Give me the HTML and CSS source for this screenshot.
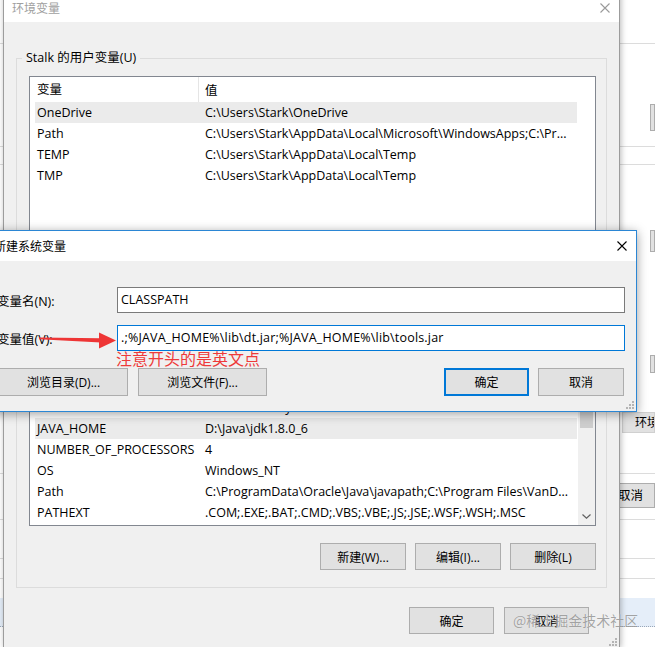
FILE: index.html
```html
<!DOCTYPE html>
<html lang="zh-CN">
<head>
<meta charset="utf-8">
<title>环境变量</title>
<link rel="stylesheet" href="styles.css">
</head>
<body>
<div class="desk">
  <div class="bg">
    <div class="sp h43"></div>
    <div class="ln"></div>
    <div class="sp h60"></div>
    <div class="bgrow h27"><span class="pbtn at650"></span></div>
    <div class="sp h15"></div>
    <div class="ln"></div>
    <div class="sp h17"></div>
    <div class="ln"></div>
    <div class="sp h65"></div>
    <div class="bgrow h22"><span class="pbtn at650"></span></div>
    <div class="sp h103"></div>
    <div class="bgrow h18"><span class="pbtn at650"></span></div>
    <div class="sp h39"></div>
    <div class="bgrow h21"><span class="pbtn envbtn">环境变量(N)...</span></div>
    <div class="sp h40"></div>
    <div class="ln"></div>
    <div class="sp h9"></div>
    <div class="bgrow h25"><span class="pbtn cancelbtn">取消</span></div>
    <div class="sp h11"></div>
    <div class="ln"></div>
    <div class="sp h38"></div>
    <div class="ln"></div>
    <div class="sp h19"></div>
    <div class="ln"></div>
    <div class="sp h19"></div>
    <div class="band"></div>
  </div>

  <section class="win main">
    <header class="titlebar inactive">
      <span class="title">环境变量</span>
      <span class="close"><svg viewBox="0 0 10 10" width="10" height="10"><path d="M0.5 0.5 L9.5 9.5 M9.5 0.5 L0.5 9.5" /></svg></span>
    </header>
    <div class="body">
      <div class="group g1">
        <span class="legend">Stalk 的用户变量(U)</span>
        <div class="list l1">
          <div class="lmain">
            <div class="lhead"><span class="h1">变量</span><span class="h2">值</span></div>
            <div class="row sel"><span class="c1">OneDrive</span><span class="c2">C:\Users\Stark\OneDrive</span></div>
            <div class="row"><span class="c1">Path</span><span class="c2">C:\Users\Stark\AppData\Local\Microsoft\WindowsApps;C:\Pr...</span></div>
            <div class="row"><span class="c1">TEMP</span><span class="c2">C:\Users\Stark\AppData\Local\Temp</span></div>
            <div class="row"><span class="c1">TMP</span><span class="c2">C:\Users\Stark\AppData\Local\Temp</span></div>
          </div>
        </div>
        <div class="btnrow">
          <button class="btn w86">新建(N)...</button>
          <button class="btn w86">编辑(E)...</button>
          <button class="btn w86">删除(D)</button>
        </div>
      </div>

      <div class="group g2">
        <span class="legend">系统变量(S)</span>
        <div class="list l2">
          <div class="lmain">
            <div class="lhead"><span class="h1">变量</span><span class="h2">值</span></div>
            <div class="rows">
              <div class="row"><span class="c1">ComSpec</span><span class="c2">C:\Windows\system32\cmd.exe</span></div>
              <div class="row"><span class="c1">DriverData</span><span class="c2">C:\Windows\System32\Drivers\DriverData</span></div>
              <div class="row sel"><span class="c1">JAVA_HOME</span><span class="c2">D:\Java\jdk1.8.0_6</span></div>
              <div class="row"><span class="c1">NUMBER_OF_PROCESSORS</span><span class="c2">4</span></div>
              <div class="row"><span class="c1">OS</span><span class="c2">Windows_NT</span></div>
              <div class="row"><span class="c1">Path</span><span class="c2">C:\ProgramData\Oracle\Java\javapath;C:\Program Files\VanD...</span></div>
              <div class="row"><span class="c1">PATHEXT</span><span class="c2">.COM;.EXE;.BAT;.CMD;.VBS;.VBE;.JS;.JSE;.WSF;.WSH;.MSC</span></div>
            </div>
          </div>
          <div class="vscroll">
            <div class="sarrow"><svg viewBox="0 0 9 5" width="9" height="5"><path d="M0.5 4.5 L4.5 0.8 L8.5 4.5"/></svg></div>
            <div class="track"><div class="thumb"></div></div>
            <div class="sarrow"><svg viewBox="0 0 9 5" width="9" height="5"><path d="M0.5 0.5 L4.5 4.2 L8.5 0.5"/></svg></div>
          </div>
        </div>
        <div class="btnrow">
          <button class="btn w86">新建(W)...</button>
          <button class="btn w86">编辑(I)...</button>
          <button class="btn w86">删除(L)</button>
        </div>
      </div>

      <div class="dlgbtns">
        <button class="btn w85">确定</button>
        <button class="btn w85">取消</button>
      </div>
    </div>
    <span class="grip"><svg viewBox="0 0 8 8" width="8" height="8"><rect x="6" y="0" width="2" height="2"/><rect x="3" y="3" width="2" height="2"/><rect x="6" y="3" width="2" height="2"/><rect x="0" y="6" width="2" height="2"/><rect x="3" y="6" width="2" height="2"/><rect x="6" y="6" width="2" height="2"/></svg></span>
  </section>

  <section class="win newvar">
    <header class="titlebar">
      <span class="title">新建系统变量</span>
      <span class="close"><svg viewBox="0 0 10 10" width="10" height="10"><path d="M0.5 0.5 L9.5 9.5 M9.5 0.5 L0.5 9.5" /></svg></span>
    </header>
    <div class="body">
      <div class="form">
        <label class="flabel">变量名(N):</label>
        <div class="input">CLASSPATH</div>
        <label class="flabel">变量值(V):</label>
        <div class="input focus">.;%JAVA_HOME%\lib\dt.jar;%JAVA_HOME%\lib\tools.jar</div>
      </div>
      <div class="nbtns">
        <div class="bgroup left">
          <button class="btn w129">浏览目录(D)...</button>
          <button class="btn w129">浏览文件(F)...</button>
        </div>
        <div class="bgroup right">
          <button class="btn w85 default">确定</button>
          <button class="btn w86">取消</button>
        </div>
      </div>
    </div>
    <span class="grip"><svg viewBox="0 0 8 8" width="8" height="8"><rect x="6" y="0" width="2" height="2"/><rect x="3" y="3" width="2" height="2"/><rect x="6" y="3" width="2" height="2"/><rect x="0" y="6" width="2" height="2"/><rect x="3" y="6" width="2" height="2"/><rect x="6" y="6" width="2" height="2"/></svg></span>
  </section>

  <svg class="arrow" viewBox="0 0 655 647" width="655" height="647">
    <polygon points="39,337.6 101,338.3 101,342.6 39,339.2" />
    <polygon points="99,332.5 116,340.4 99,348.5" />
  </svg>
  <div class="note">注意开头的是英文点</div>
  <div class="watermark">@稀土掘金技术社区</div>
</div>
</body>
</html>
```

FILE: styles.css
```css
* { box-sizing: border-box; }
html, body { margin: 0; padding: 0; }
body {
  width: 655px;
  height: 647px;
  overflow: hidden;
  background: #ffffff;
  font-family: "Open Sans", "Noto Sans CJK SC", sans-serif;
  font-size: 12.5px;
  color: #000;
}
.desk { position: relative; width: 655px; height: 647px; overflow: hidden; }

/* background window */
.bg { position: absolute; inset: 0; display: flex; flex-direction: column; background: #fff; }
.sp { flex: none; }
.h9 { height: 9px; } .h11 { height: 11px; } .h15 { height: 15px; } .h17 { height: 17px; }
.h18 { height: 18px; } .h19 { height: 19px; } .h21 { height: 21px; } .h22 { height: 22px; }
.h25 { height: 25px; } .h27 { height: 27px; } .h38 { height: 38px; } .h39 { height: 39px; }
.h40 { height: 40px; } .h43 { height: 43px; } .h60 { height: 60px; } .h65 { height: 65px; }
.h103 { height: 103px; }
.ln { flex: none; height: 1px; background: #dcdcdc; }
.bgrow { flex: none; display: flex; }
.pbtn { display: block; height: 100%; background: #e1e1e1; border: 1px solid #adadad; font-size: 12px; white-space: nowrap; overflow: hidden; }
.at650 { margin-left: 650px; width: 40px; }
.envbtn { margin-left: 622px; width: 110px; padding-left: 12px; line-height: 19px; border-color: #d0d0d0; }
.cancelbtn { margin-left: 606px; width: 56px; text-align: center; line-height: 23px; font-size: 12.5px; }
.band { flex: none; height: 29px; background: #e5eef9; border-bottom: 1px dotted #9aa7b8; }

/* windows */
.win { position: absolute; background: #f0f0f0; display: flex; flex-direction: column; }
.main {
  left: 3px; top: -8px; width: 617px; height: 656px;
  border: 1px solid #9c9c9c;
  box-shadow: 1px 0 6px rgba(0,0,0,0.28);
}
.newvar {
  left: -13px; top: 230px; width: 650px; height: 182px;
  border: 1px solid #2b86d4;
  box-shadow: 0 2px 10px rgba(0,0,0,0.38);
}
.titlebar {
  flex: none; display: flex; align-items: center; justify-content: space-between;
  background: #fff; padding-left: 8px;
}
.main .titlebar { height: 29px; }
.newvar .titlebar { height: 30px; padding-left: 6px; }
.titlebar .title { font-size: 12px; white-space: nowrap; }
.titlebar.inactive .title { color: #a0a0a0; }
.close { width: 28px; display: flex; justify-content: center; align-items: center; }
.close svg path { stroke: #000; stroke-width: 1.1; fill: none; }
.inactive .close svg path { stroke: #9a9a9a; }

.body { flex: 1; display: flex; flex-direction: column; }
.main .body { padding: 36px 12px 0; }

/* group boxes */
.group { position: relative; border: 1px solid #dcdcdc; padding: 17px 10px 17px 12px; }
.g1 { padding-bottom: 16px; }
.g2 { margin-top: 13px; }
.legend {
  position: absolute; top: -9px; left: 5px; padding: 0 4px;
  background: #f0f0f0; line-height: 16px; white-space: nowrap;
}

/* list views */
.list { background: #fff; border: 1px solid #828790; display: flex; padding-left: 5px; overflow: hidden; }
.l1 { height: 160px; }
.l2 { height: 197px; }
.lmain { flex: 1; display: flex; flex-direction: column; min-width: 0; }
.lhead { flex: none; height: 25px; display: flex; align-items: center; }
.lhead .h1 { width: 164px; padding-left: 2px; border-right: 1px solid #e5e5e5; line-height: 25px; }
.lhead .h2 { padding-left: 6px; }
.rows { flex: 1; display: flex; flex-direction: column; justify-content: flex-end; padding-bottom: 2px; overflow: hidden; }
.row { flex: none; width: 542px; height: 21px; display: flex; align-items: center; white-space: nowrap; }
.row.sel { background: #ebebeb; }
.row .c1 { flex: none; width: 168px; padding-left: 2px; overflow: hidden; }
.row .c2 { flex: 1; padding-left: 2px; overflow: hidden; }
.vscroll { flex: none; width: 17px; display: flex; flex-direction: column; background: #f0f0f0; }
.sarrow { flex: none; height: 17px; display: flex; align-items: center; justify-content: center; }
.sarrow svg path { stroke: #606060; stroke-width: 1.2; fill: none; }
.track { flex: 1; padding: 13px 2px 0; }
.thumb { height: 68px; background: #cdcdcd; }

/* buttons */
.btn {
  height: 27px; border: 1px solid #adadad; background: #e1e1e1;
  font-family: "Open Sans", "Noto Sans CJK SC", sans-serif; font-size: 12px; color: #000;
  padding: 0; margin: 0; white-space: nowrap;
}
.w85 { width: 85px; } .w86 { width: 86px; } .w129 { width: 129px; }
.btn.default { border: 2px solid #0078d7; }
.btnrow { display: flex; justify-content: flex-end; gap: 9px; margin-top: 18px; }
.g2 .btnrow { margin-top: 17px; }
.dlgbtns { display: flex; justify-content: flex-end; gap: 10px; margin-top: 19px; margin-right: 18px; }

/* new variable dialog */
.newvar .body { padding: 26px 11px 15px 9px; }
.form { display: grid; grid-template-columns: 120px 508px; row-gap: 12px; align-items: center; }
.flabel { white-space: nowrap; }
.input {
  height: 26px; background: #fff; border: 1px solid #7a7a7a;
  padding-left: 3px; line-height: 24px; white-space: nowrap; overflow: hidden;
}
.input.focus { border-color: #0078d7; letter-spacing: 0.18px; }
.nbtns { display: flex; justify-content: space-between; margin-top: 17px; }
.bgroup { display: flex; }
.bgroup.left { gap: 10px; margin-left: 2px; }
.bgroup.right { gap: 9px; margin-right: 1px; }
.nbtns .btn { height: 28px; }

/* size grips */
.grip { position: absolute; right: 2px; bottom: 2px; display: flex; }
.grip svg rect { fill: #b4b4b4; }
.main .grip { bottom: 1px; }

/* annotations on top of the screenshot */
.arrow { position: absolute; left: 0; top: 0; pointer-events: none; }
.arrow polygon { fill: #ee3535; }
.note {
  position: absolute; left: 116px; top: 349px;
  font-family: "Noto Sans CJK SC", sans-serif; font-size: 16px; line-height: 18px;
  color: #ee3a3a; white-space: nowrap;
}
.watermark {
  position: absolute; left: 513px; top: 610px;
  font-family: "Noto Sans CJK SC", sans-serif; font-size: 14px; line-height: 20px;
  color: rgba(130,130,130,0.72); text-shadow: 0 0 1px rgba(255,255,255,0.8);
  white-space: nowrap;
}
```
